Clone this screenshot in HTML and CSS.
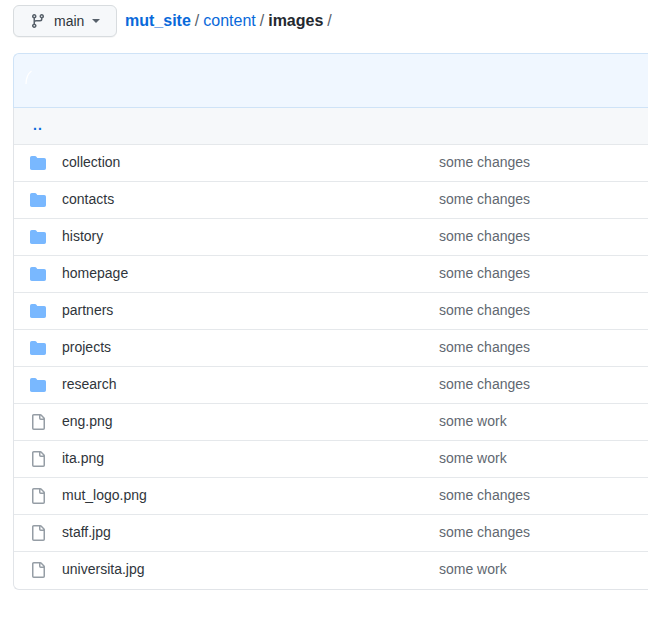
FILE: index.html
```html
<!DOCTYPE html>
<html lang="en">

<head>
    <meta charset="UTF-8">
    <title>mut_site/content/images</title>
    <link rel="stylesheet" href="styles.css">
</head>

<body>
    <div class="file-nav">
        <button class="branch-btn">
            <svg class="branch-icon" viewBox="0 0 16 16" width="16" height="16">
                <path fill-rule="evenodd" d="M11.75 2.5a.75.75 0 100 1.5.75.75 0 000-1.5zm-2.25.75a2.25 2.25 0 113 2.122V6A2.5 2.5 0 0110 8.5H6a1 1 0 00-1 1v1.128a2.251 2.251 0 11-1.5 0V5.372a2.25 2.25 0 111.5 0v1.836A2.492 2.492 0 016 7h4a1 1 0 001-1v-.628A2.25 2.25 0 019.5 3.25zM4.25 12a.75.75 0 100 1.5.75.75 0 000-1.5zM3.5 3.25a.75.75 0 111.5 0 .75.75 0 01-1.5 0z"></path>
            </svg>
            <span>main</span>
            <span class="caret"></span>
        </button>
        <div class="crumbs">
            <a href="#" class="repo">mut_site</a><span class="sep">/</span><a href="#">content</a><span class="sep">/</span><strong>images</strong><span class="sep">/</span>
        </div>
    </div>

    <div class="file-box">
        <div class="commit-bar">
            <svg class="spinner" viewBox="0 0 8 16" width="8" height="16">
                <path d="M7.5 1C4 3.5 2.2 8 2 14" fill="none" stroke="#fff" stroke-width="1.3"></path>
            </svg>
        </div>
        <div class="rows">
            <div class="row row-up"><a href="#" class="up">..</a></div>

            <div class="row"><svg class="icon dir"><use href="#folder"></use></svg><a href="#" class="name">collection</a><span class="msg">some changes</span></div>
            <div class="row"><svg class="icon dir"><use href="#folder"></use></svg><a href="#" class="name">contacts</a><span class="msg">some changes</span></div>
            <div class="row"><svg class="icon dir"><use href="#folder"></use></svg><a href="#" class="name">history</a><span class="msg">some changes</span></div>
            <div class="row"><svg class="icon dir"><use href="#folder"></use></svg><a href="#" class="name">homepage</a><span class="msg">some changes</span></div>
            <div class="row"><svg class="icon dir"><use href="#folder"></use></svg><a href="#" class="name">partners</a><span class="msg">some changes</span></div>
            <div class="row"><svg class="icon dir"><use href="#folder"></use></svg><a href="#" class="name">projects</a><span class="msg">some changes</span></div>
            <div class="row"><svg class="icon dir"><use href="#folder"></use></svg><a href="#" class="name">research</a><span class="msg">some changes</span></div>
            <div class="row"><svg class="icon doc"><use href="#file"></use></svg><a href="#" class="name">eng.png</a><span class="msg">some work</span></div>
            <div class="row"><svg class="icon doc"><use href="#file"></use></svg><a href="#" class="name">ita.png</a><span class="msg">some work</span></div>
            <div class="row"><svg class="icon doc"><use href="#file"></use></svg><a href="#" class="name">mut_logo.png</a><span class="msg">some changes</span></div>
            <div class="row"><svg class="icon doc"><use href="#file"></use></svg><a href="#" class="name">staff.jpg</a><span class="msg">some changes</span></div>
            <div class="row"><svg class="icon doc"><use href="#file"></use></svg><a href="#" class="name">universita.jpg</a><span class="msg">some work</span></div>
        </div>
    </div>

    <svg class="defs" width="0" height="0">
        <symbol id="folder" viewBox="0 0 16 16">
            <path d="M1.75 1A1.75 1.75 0 000 2.75v10.5C0 14.216.784 15 1.75 15h12.5A1.75 1.75 0 0016 13.25v-8.5A1.75 1.75 0 0014.25 3H7.5a.25.25 0 01-.2-.1l-.9-1.2C6.07 1.26 5.55 1 5 1H1.75z"></path>
        </symbol>
        <symbol id="file" viewBox="0 0 16 16">
            <path fill-rule="evenodd" d="M3.75 1.5a.25.25 0 00-.25.25v12.5c0 .138.112.25.25.25h9.5a.25.25 0 00.25-.25V6h-2.75A1.75 1.75 0 019 4.25V1.5H3.75zm6.75.062V4.25c0 .138.112.25.25.25h2.688a.252.252 0 00-.011-.013l-2.914-2.914a.272.272 0 00-.013-.011zM2 1.75C2 .784 2.784 0 3.75 0h6.586c.464 0 .909.184 1.237.513l2.914 2.914c.329.328.513.773.513 1.237v9.586A1.75 1.75 0 0113.25 16h-9.5A1.75 1.75 0 012 14.25V1.75z"></path>
        </symbol>
    </svg>
</body>

</html>
```

FILE: styles.css
```css
body {
    margin: 0;
    height: 625px;
    padding: 5px 0 0 13px;
    box-sizing: border-box;
    overflow: hidden;
    background: #ffffff;
    color: #24292f;
    font-family: "Liberation Sans", Arial, sans-serif;
    font-size: 14px;
}

a {
    color: #0969da;
    text-decoration: none;
}

.file-nav {
    display: flex;
    align-items: center;
    gap: 8px;
    height: 32px;
    margin-bottom: 16px;
}

.branch-btn {
    display: flex;
    align-items: center;
    width: 104px;
    height: 32px;
    padding: 0 16px;
    box-sizing: border-box;
    background: #f6f8fa;
    border: 1px solid #d8dcdf;
    border-radius: 6px;
    box-shadow: 0 1px 0 rgba(27, 31, 36, 0.04);
    color: #2f353b;
    font: inherit;
}

.branch-icon {
    fill: #57606a;
    margin-right: 8px;
    flex: none;
}

.caret {
    width: 0;
    height: 0;
    margin-left: 8px;
    border-top: 4px solid #57606a;
    border-left: 4px solid transparent;
    border-right: 4px solid transparent;
}

.crumbs {
    font-size: 16px;
    color: #57606a;
    white-space: nowrap;
}

.crumbs .repo {
    font-weight: 600;
}

.crumbs strong {
    color: #24292f;
    font-weight: 600;
}

.sep {
    padding: 0 4px;
}

.commit-bar {
    height: 37px;
    padding: 16px 0 0 10px;
    background: #f0f7ff;
    border: 1px solid #cfe3f7;
    border-right: none;
    border-top-left-radius: 6px;
}

.spinner {
    display: block;
}

.rows {
    border-left: 1px solid #e1e4e8;
    border-bottom: 1px solid #e1e4e8;
    border-bottom-left-radius: 6px;
}

.row {
    display: flex;
    align-items: center;
    height: 36px;
    padding-left: 16px;
    border-bottom: 1px solid #e5e8eb;
}

.row:last-child {
    padding-bottom: 1px;
    border-bottom: none;
}

.row-up {
    background: #f6f8fa;
}

.up {
    padding-left: 3px;
    margin-bottom: 2px;
    font-weight: 600;
    letter-spacing: 1px;
}

.icon {
    width: 16px;
    height: 16px;
    flex: none;
    margin-right: 16px;
}

.dir {
    fill: #79b8ff;
}

.doc {
    fill: #959da5;
}

.name {
    width: 377px;
    flex: none;
    margin-bottom: 2px;
    color: #2f353b;
}

.msg {
    margin-bottom: 2px;
    color: #5f6871;
}

.defs {
    position: absolute;
}
```
